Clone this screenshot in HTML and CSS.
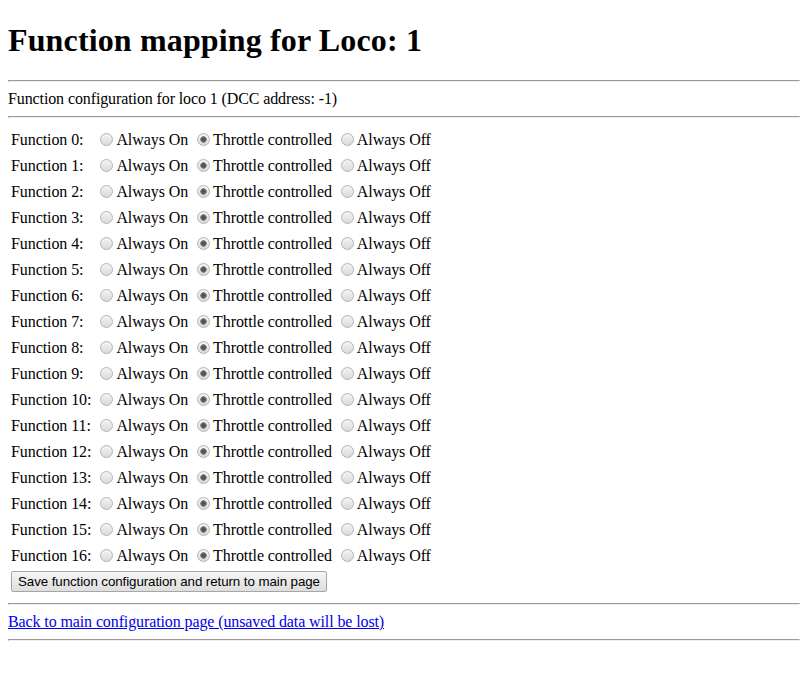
FILE: index.html
```html
<!DOCTYPE html>
<html>
<head>
<meta charset="utf-8">
<title>Function mapping</title>
<link rel="stylesheet" href="styles.css">
</head>
<body>
<h1 class="title">Function mapping for Loco: 1</h1>
<hr class="rule">
<div class="desc">Function configuration for loco 1 (DCC address: -1)</div>
<hr class="rule">
<form class="fform">
<table class="ftable">
<tr><td>Function 0:</td><td><input class="radio" type="radio" name="f0">Always On <input class="radio" type="radio" name="f0" checked>Throttle controlled <input class="radio" type="radio" name="f0">Always Off</td></tr>
<tr><td>Function 1:</td><td><input class="radio" type="radio" name="f1">Always On <input class="radio" type="radio" name="f1" checked>Throttle controlled <input class="radio" type="radio" name="f1">Always Off</td></tr>
<tr><td>Function 2:</td><td><input class="radio" type="radio" name="f2">Always On <input class="radio" type="radio" name="f2" checked>Throttle controlled <input class="radio" type="radio" name="f2">Always Off</td></tr>
<tr><td>Function 3:</td><td><input class="radio" type="radio" name="f3">Always On <input class="radio" type="radio" name="f3" checked>Throttle controlled <input class="radio" type="radio" name="f3">Always Off</td></tr>
<tr><td>Function 4:</td><td><input class="radio" type="radio" name="f4">Always On <input class="radio" type="radio" name="f4" checked>Throttle controlled <input class="radio" type="radio" name="f4">Always Off</td></tr>
<tr><td>Function 5:</td><td><input class="radio" type="radio" name="f5">Always On <input class="radio" type="radio" name="f5" checked>Throttle controlled <input class="radio" type="radio" name="f5">Always Off</td></tr>
<tr><td>Function 6:</td><td><input class="radio" type="radio" name="f6">Always On <input class="radio" type="radio" name="f6" checked>Throttle controlled <input class="radio" type="radio" name="f6">Always Off</td></tr>
<tr><td>Function 7:</td><td><input class="radio" type="radio" name="f7">Always On <input class="radio" type="radio" name="f7" checked>Throttle controlled <input class="radio" type="radio" name="f7">Always Off</td></tr>
<tr><td>Function 8:</td><td><input class="radio" type="radio" name="f8">Always On <input class="radio" type="radio" name="f8" checked>Throttle controlled <input class="radio" type="radio" name="f8">Always Off</td></tr>
<tr><td>Function 9:</td><td><input class="radio" type="radio" name="f9">Always On <input class="radio" type="radio" name="f9" checked>Throttle controlled <input class="radio" type="radio" name="f9">Always Off</td></tr>
<tr><td>Function 10:</td><td><input class="radio" type="radio" name="f10">Always On <input class="radio" type="radio" name="f10" checked>Throttle controlled <input class="radio" type="radio" name="f10">Always Off</td></tr>
<tr><td>Function 11:</td><td><input class="radio" type="radio" name="f11">Always On <input class="radio" type="radio" name="f11" checked>Throttle controlled <input class="radio" type="radio" name="f11">Always Off</td></tr>
<tr><td>Function 12:</td><td><input class="radio" type="radio" name="f12">Always On <input class="radio" type="radio" name="f12" checked>Throttle controlled <input class="radio" type="radio" name="f12">Always Off</td></tr>
<tr><td>Function 13:</td><td><input class="radio" type="radio" name="f13">Always On <input class="radio" type="radio" name="f13" checked>Throttle controlled <input class="radio" type="radio" name="f13">Always Off</td></tr>
<tr><td>Function 14:</td><td><input class="radio" type="radio" name="f14">Always On <input class="radio" type="radio" name="f14" checked>Throttle controlled <input class="radio" type="radio" name="f14">Always Off</td></tr>
<tr><td>Function 15:</td><td><input class="radio" type="radio" name="f15">Always On <input class="radio" type="radio" name="f15" checked>Throttle controlled <input class="radio" type="radio" name="f15">Always Off</td></tr>
<tr><td>Function 16:</td><td><input class="radio" type="radio" name="f16">Always On <input class="radio" type="radio" name="f16" checked>Throttle controlled <input class="radio" type="radio" name="f16">Always Off</td></tr>
<tr><td colspan="2" class="btncell"><input class="btn" type="submit" value="Save function configuration and return to main page"></td></tr>
</table>
</form>
<hr class="rule">
<div class="linkline"><a class="back" href="#">Back to main configuration page (unsaved data will be lost)</a></div>
<hr class="rule">
</body>
</html>
```

FILE: styles.css
```css
html {
  margin: 0;
  padding: 0;
}
body {
  margin: 0 0 8px 8px;
  font-family: "Liberation Serif", "Times New Roman", serif;
  font-size: 16px;
  line-height: 18px;
  letter-spacing: -0.11px;
  color: #000;
  background: #fff;
}
.title {
  font-size: 32px;
  font-weight: bold;
  line-height: 37px;
  letter-spacing: 0.14px;
  margin: 22px 0 21px 0;
  padding-top: 0;
}
.rule {
  margin: 8px 0;
  border-width: 1px;
  border-style: solid;
  border-color: #9a9a9a #eee #eee #9a9a9a;
  height: 0;
}
.desc {
  line-height: 18px;
}
.fform {
  margin: 0;
}
.ftable {
  border-spacing: 2px;
  letter-spacing: -0.08px;
}
.ftable td {
  padding: 1px;
  line-height: 22px;
  height: 22px;
  white-space: nowrap;
}
.ftable td.btncell {
  line-height: normal;
  height: auto;
}
.radio {
  -webkit-appearance: none;
  appearance: none;
  box-sizing: border-box;
  width: 13px;
  height: 13px;
  margin: 3px 3px 0 5px;
  border: 1px solid #b4b4b4;
  border-radius: 50%;
  background: linear-gradient(#f4f4f4, #dadada);
  vertical-align: -1px;
}
.radio:checked {
  background:
    radial-gradient(circle at 50% 50%, #4e4e4e 0, #5a5a5a 2px, #8a8a8a 3px, rgba(255,255,255,0) 3.6px),
    linear-gradient(#f4f4f4, #dadada);
}
.btn {
  -webkit-appearance: none;
  appearance: none;
  font-family: "Liberation Sans", Arial, sans-serif;
  font-size: 13.333px;
  line-height: 15px;
  letter-spacing: -0.08px;
  padding: 2px 6px 2px 6px;
  margin: 0;
  height: 21px;
  border: 1px solid #a6a6a6;
  border-radius: 2px;
  background: linear-gradient(#f6f6f6, #dedede);
  color: #000;
}
.linkline {
  line-height: 18px;
}
.back {
  color: #0000ee;
  text-decoration: underline;
}
```
